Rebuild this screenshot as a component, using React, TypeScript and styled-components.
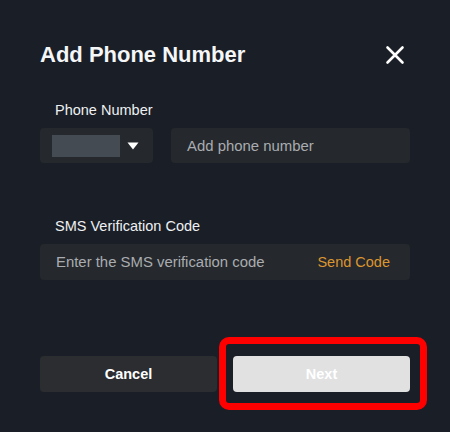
import React from "react";
import styled, { createGlobalStyle } from "styled-components";

const Global = createGlobalStyle`
  html, body { margin: 0; padding: 0; background: #1a1f27; }
  body { font-family: "Liberation Sans", Arial, sans-serif; }
  * { box-sizing: border-box; }
`;

const Dialog = styled.div`
  position: relative;
  width: 450px;
  height: 432px;
  background: #1a1f27;
  padding: 42px 40px 0 40px;
  display: flex;
  flex-direction: column;
`;

const Header = styled.div`
  display: flex;
  align-items: center;
  justify-content: space-between;
  height: 26px;
`;

const Title = styled.h1`
  margin: 0;
  font-size: 22px;
  font-weight: 700;
  color: #f4f6f8;
  letter-spacing: 0;
`;

const CloseButton = styled.button`
  background: none;
  border: none;
  padding: 0;
  width: 20px;
  height: 20px;
  margin-right: 5px;
  display: flex;
  align-items: center;
  justify-content: center;
  cursor: pointer;
`;

const Label = styled.div<{ $top: number }>`
  margin-top: ${(p) => p.$top}px;
  padding-left: 15px;
  font-size: 14.5px;
  color: #eef0f2;
  line-height: 16px;
  height: 16px;
`;

const Row = styled.div`
  display: flex;
  gap: 18px;
  margin-top: 10px;
`;

const Select = styled.div`
  width: 113px;
  height: 35px;
  background: #25282c;
  border-radius: 4px;
  display: flex;
  align-items: center;
  padding-left: 12px;
  gap: 7px;
`;

const Masked = styled.div`
  width: 68px;
  height: 22px;
  background: #454b52;
`;

const Field = styled.div<{ $h: number }>`
  flex: 1;
  height: ${(p) => p.$h}px;
  background: #25282c;
  border-radius: 4px;
  display: flex;
  align-items: center;
  justify-content: space-between;
  padding: 0 20px 0 16px;
  font-size: 14.9px;
`;

const Placeholder = styled.span`
  color: #a9acb0;
`;

const SendCode = styled.span`
  color: #dc9630;
  font-size: 14.5px;
`;

const Actions = styled.div`
  margin-top: 76px;
  display: flex;
  gap: 16px;
`;

const Button = styled.button<{ $primary?: boolean }>`
  flex: 1;
  height: 36px;
  border: none;
  border-radius: 4px;
  font-family: inherit;
  font-size: 14.5px;
  font-weight: 700;
  color: #ffffff;
  background: ${(p) => (p.$primary ? "#e1e1e2" : "#2b2d30")};
`;

const Highlight = styled.div`
  position: absolute;
  left: 219px;
  top: 337px;
  width: 208px;
  height: 73px;
  border: 7px solid #ff0000;
  border-radius: 10px;
  pointer-events: none;
`;

export default function App() {
  return (
    <>
      <Global />
      <Dialog>
        <Header>
          <Title>Add Phone Number</Title>
          <CloseButton aria-label="close">
            <svg width="20" height="20" viewBox="0 0 20 20">
              <path d="M2.5 2.5 L17.5 17.5 M17.5 2.5 L2.5 17.5" stroke="#ffffff" strokeWidth="2.6" strokeLinecap="round" />
            </svg>
          </CloseButton>
        </Header>
        <Label $top={34}>Phone Number</Label>
        <Row>
          <Select>
            <Masked />
            <svg width="12" height="8" viewBox="0 0 12 8">
              <path d="M0.5 0.5 L11.5 0.5 L6 7.5 Z" fill="#ffffff" />
            </svg>
          </Select>
          <Field $h={35}>
            <Placeholder>Add phone number</Placeholder>
          </Field>
        </Row>
        <Label $top={55}>SMS Verification Code</Label>
        <Row>
          <Field $h={36}>
            <Placeholder>Enter the SMS verification code</Placeholder>
            <SendCode>Send Code</SendCode>
          </Field>
        </Row>
        <Actions>
          <Button>Cancel</Button>
          <Button $primary>Next</Button>
        </Actions>
        <Highlight />
      </Dialog>
    </>
  );
}
